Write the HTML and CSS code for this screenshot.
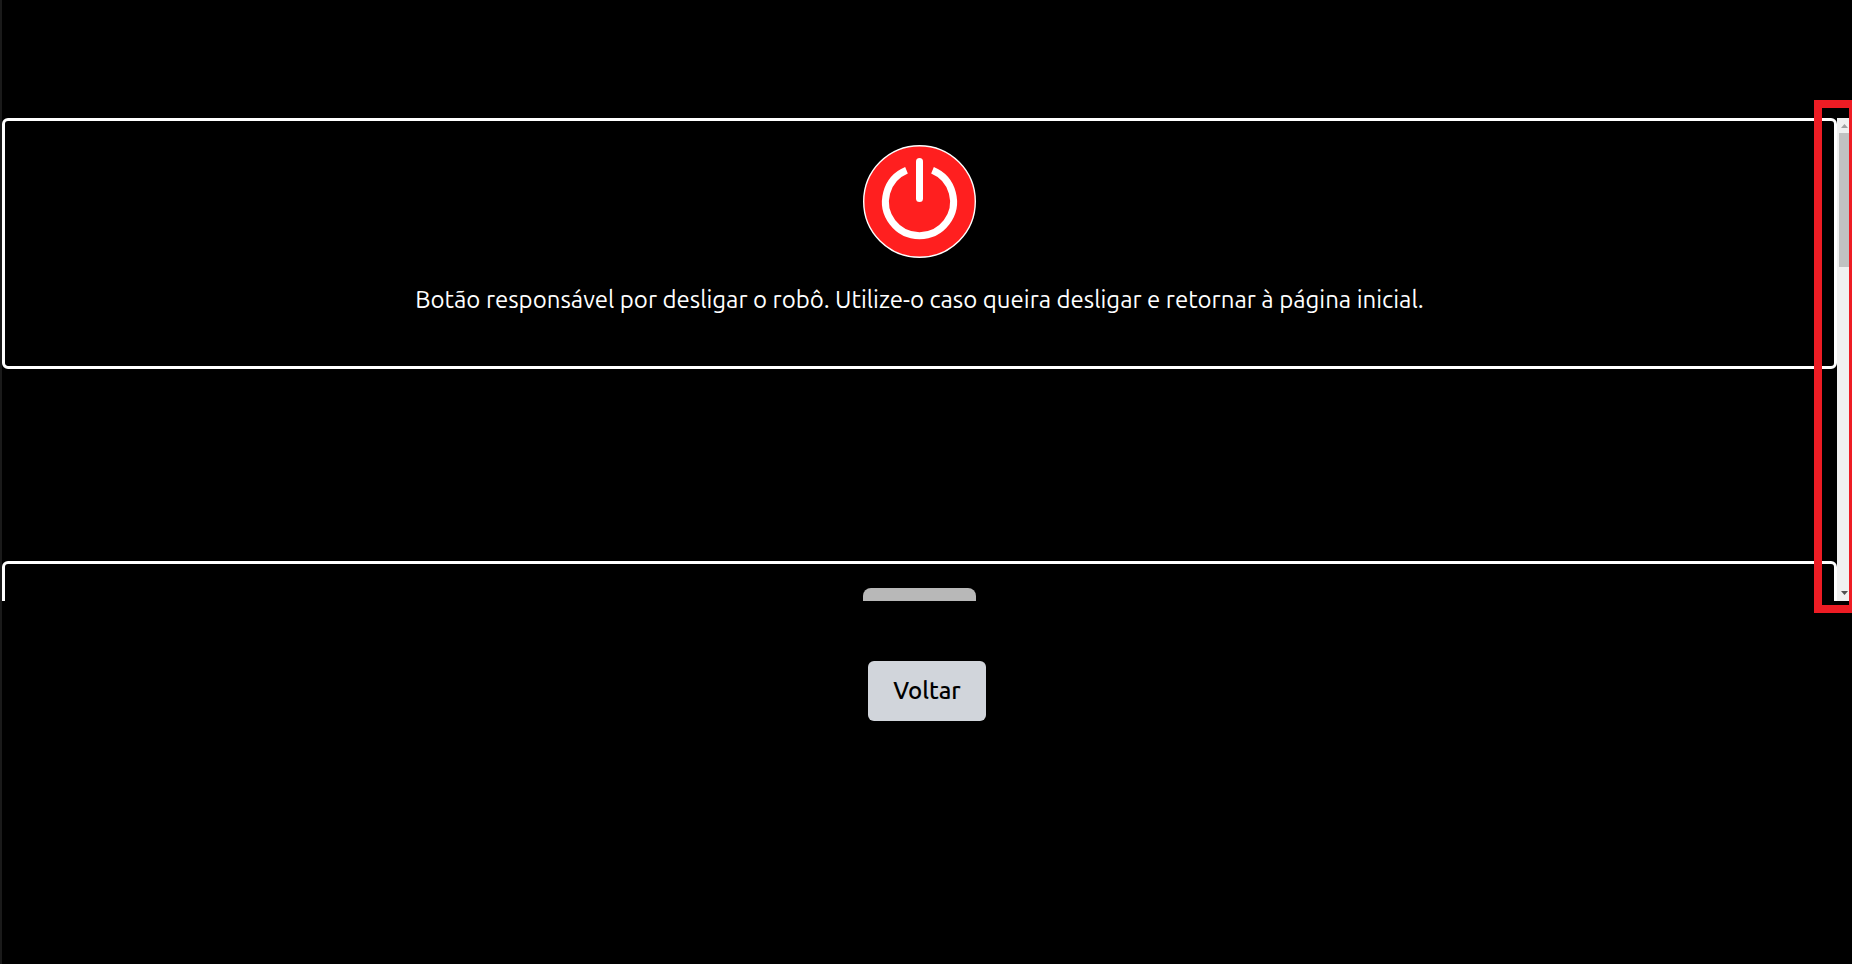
FILE: index.html
```html
<!DOCTYPE html>
<html lang="pt-BR">
<head>
<meta charset="utf-8">
<title>Ajuda</title>
<link rel="stylesheet" href="styles.css">
</head>
<body>
<main class="page">
  <section class="viewer">
    <div class="cards">
      <article class="card">
        <svg class="card-icon" viewBox="0 0 113 113" role="img" aria-label="Desligar">
          <circle cx="56.5" cy="56.5" r="55.8" fill="#ff1f1f" stroke="#fff" stroke-width="1.4"/>
          <path d="M43.5 25.3A34 34 0 1 0 69.5 25.3" fill="none" stroke="#fff" stroke-width="7"/>
          <path d="M56.5 16.5V53.5" fill="none" stroke="#fff" stroke-width="7" stroke-linecap="round"/>
        </svg>
        <p class="card-text">Botão responsável por desligar o robô. Utilize-o caso queira desligar e retornar à página inicial.</p>
      </article>
      <article class="card">
        <div class="card-icon tile"></div>
      </article>
    </div>
    <div class="scrollbar">
      <svg class="arrow" viewBox="0 0 15 15"><path d="M4 10L7.5 6L11 10Z" fill="#a0a0a0"/></svg>
      <div class="thumb"></div>
      <svg class="arrow arrow-down" viewBox="0 0 15 15"><path d="M4 5L7.5 9L11 5Z" fill="#505050"/></svg>
    </div>
    <div class="highlight"></div>
  </section>
  <button class="back" type="button">Voltar</button>
</main>
</body>
</html>
```
FILE: styles.css
```css
* { box-sizing: border-box; }
body {
  margin: 0;
  background: #000;
  color: #fff;
  font-family: Ubuntu, "Noto Sans", sans-serif;
}
.page {
  min-height: 100vh;
  padding-top: 118px;
  border-left: 2px solid #1a1a1a;
  display: flex;
  flex-direction: column;
  align-items: center;
  gap: 60px;
  overflow: hidden;
}
.viewer {
  position: relative;
  display: flex;
  width: 100%;
  height: 483px;
}
.cards {
  flex: 1;
  display: flex;
  flex-direction: column;
  gap: 192px;
  overflow: hidden;
}
.card {
  flex: none;
  height: 251px;
  padding-top: 24px;
  border: 3px solid #fff;
  border-radius: 6px;
  display: flex;
  flex-direction: column;
  align-items: center;
  gap: 24px;
}
.card-icon { width: 113px; height: 113px; flex: none; }
.tile { background: #b8b8b8; border-radius: 8px; }
.card-text { margin: 0; font-size: 24px; line-height: 36px; }
.scrollbar {
  width: 15px;
  background: #f0f0f0;
  display: flex;
  flex-direction: column;
}
.arrow { width: 15px; height: 15px; flex: none; }
.arrow-down { margin-top: auto; }
.thumb { height: 134px; margin: 0 2px; background: #c1c1c1; }
.highlight {
  position: absolute;
  top: -18px;
  right: -5px;
  bottom: -12px;
  width: 43px;
  border: 8px solid #ee1c24;
}
.back {
  height: 60px;
  padding: 0 25px 2px;
  border: 0;
  border-radius: 6px;
  background: #d1d5db;
  color: #000;
  font-family: inherit;
  font-size: 24px;
  font-weight: 500;
}
```
